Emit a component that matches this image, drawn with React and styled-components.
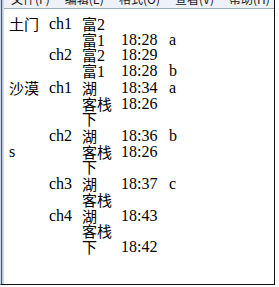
import React from "react";
import styled, { createGlobalStyle } from "styled-components";

const Global = createGlobalStyle`
  html, body { margin: 0; padding: 0; background: #ffffff; }
  body { width: 279px; height: 287px; overflow: hidden; }
`;

const Window = styled.div`
  box-sizing: border-box;
  width: 275px;
  height: 285px;
  display: flex;
  flex-direction: column;
  border-left: 1px solid #c9d5e6;
  border-bottom: 1px solid #111;
  border-right: 1px solid #111;
  box-shadow: inset 1px 0 0 #4d5868, inset 2px 0 0 #b3cbe8, inset 3px 0 0 #d6dbe2;
  background: #fff;
`;

const MenuBar = styled.div`
  height: 8px;
  flex: none;
  display: flex;
  align-items: flex-end;
  gap: 15px;
  overflow: hidden;
  background: #eef1f7;
  border-bottom: 1px solid #9aaac2;
  margin-left: 3px;
  padding-left: 7px;
`;

const MenuItem = styled.span`
  font-family: "Noto Sans CJK SC", sans-serif;
  font-size: 12px;
  line-height: 16px;
  margin-bottom: 1px;
  color: #1a1a1a;
  white-space: nowrap;
`;

const Content = styled.div`
  flex: 1;
  padding: 7px 0 0 8px;
  display: grid;
  grid-template-columns: 40px 33px 39px 48px auto;
  grid-auto-rows: min-content;
  font-size: 16px;
  color: #000;
`;

const serif = '"Liberation Serif", "Times New Roman", serif';
const cjk = '"Noto Sans CJK SC", sans-serif';

const Cell = styled.div`
  height: 15.5px;
  line-height: 15.5px;
  white-space: nowrap;
  font-family: ${(p) => (p.$cjk ? cjk : serif)};
  font-size: ${(p) => (p.$cjk ? 15 : 16)}px;
  font-weight: 400;
  margin-top: ${(p) => (p.$gap ? p.$gap : 0)}px;
`;

const NamePart = styled.span`
  font-family: ${(p) => (p.$cjk ? cjk : serif)};
  font-size: ${(p) => (p.$cjk ? 15 : 16)}px;
`;

const lines = [
  ["土门", "ch1", "富2", "", "", 0],
  ["", "", "富1", "18:28", "a", 0],
  ["", "ch2", "富2", "18:29", "", 0],
  ["", "", "富1", "18:28", "b", 0],
  ["沙漠", "ch1", "湖", "18:34", "a", 2],
  ["", "", "客栈", "18:26", "", 0],
  ["", "", "下", "", "", 0],
  ["", "ch2", "湖", "18:36", "b", 1.5],
  ["s", "", "客栈", "18:26", "", 0],
  ["", "", "下", "", "", 0],
  ["", "ch3", "湖", "18:37", "c", 1.5],
  ["", "", "客栈", "", "", 0],
  ["", "ch4", "湖", "18:43", "", 0.5],
  ["", "", "客栈", "", "", 0],
  ["", "", "下", "18:42", "", 0],
];

const isCjk = (t) => /[\u4e00-\u9fff]/.test(t);

const menus = ["文件(F)", "编辑(E)", "格式(O)", "查看(V)", "帮助(H)"];

export default function App() {
  return (
    <>
      <Global />
      <Window>
        <MenuBar>
          {menus.map((m) => (
            <MenuItem key={m}>{m}</MenuItem>
          ))}
        </MenuBar>
        <Content>
          {lines.map((row, i) =>
            row.slice(0, 5).map((t, j) =>
              j === 2 ? (
                <Cell key={i + "-" + j} $gap={row[5]}>
                  {t.split(/(\d+)/).map((part, k) =>
                    part ? (
                      <NamePart key={k} $cjk={isCjk(part)}>
                        {part}
                      </NamePart>
                    ) : null
                  )}
                </Cell>
              ) : (
                <Cell key={i + "-" + j} $gap={row[5]} $cjk={isCjk(t)}>
                  {t}
                </Cell>
              )
            )
          )}
        </Content>
      </Window>
    </>
  );
}
